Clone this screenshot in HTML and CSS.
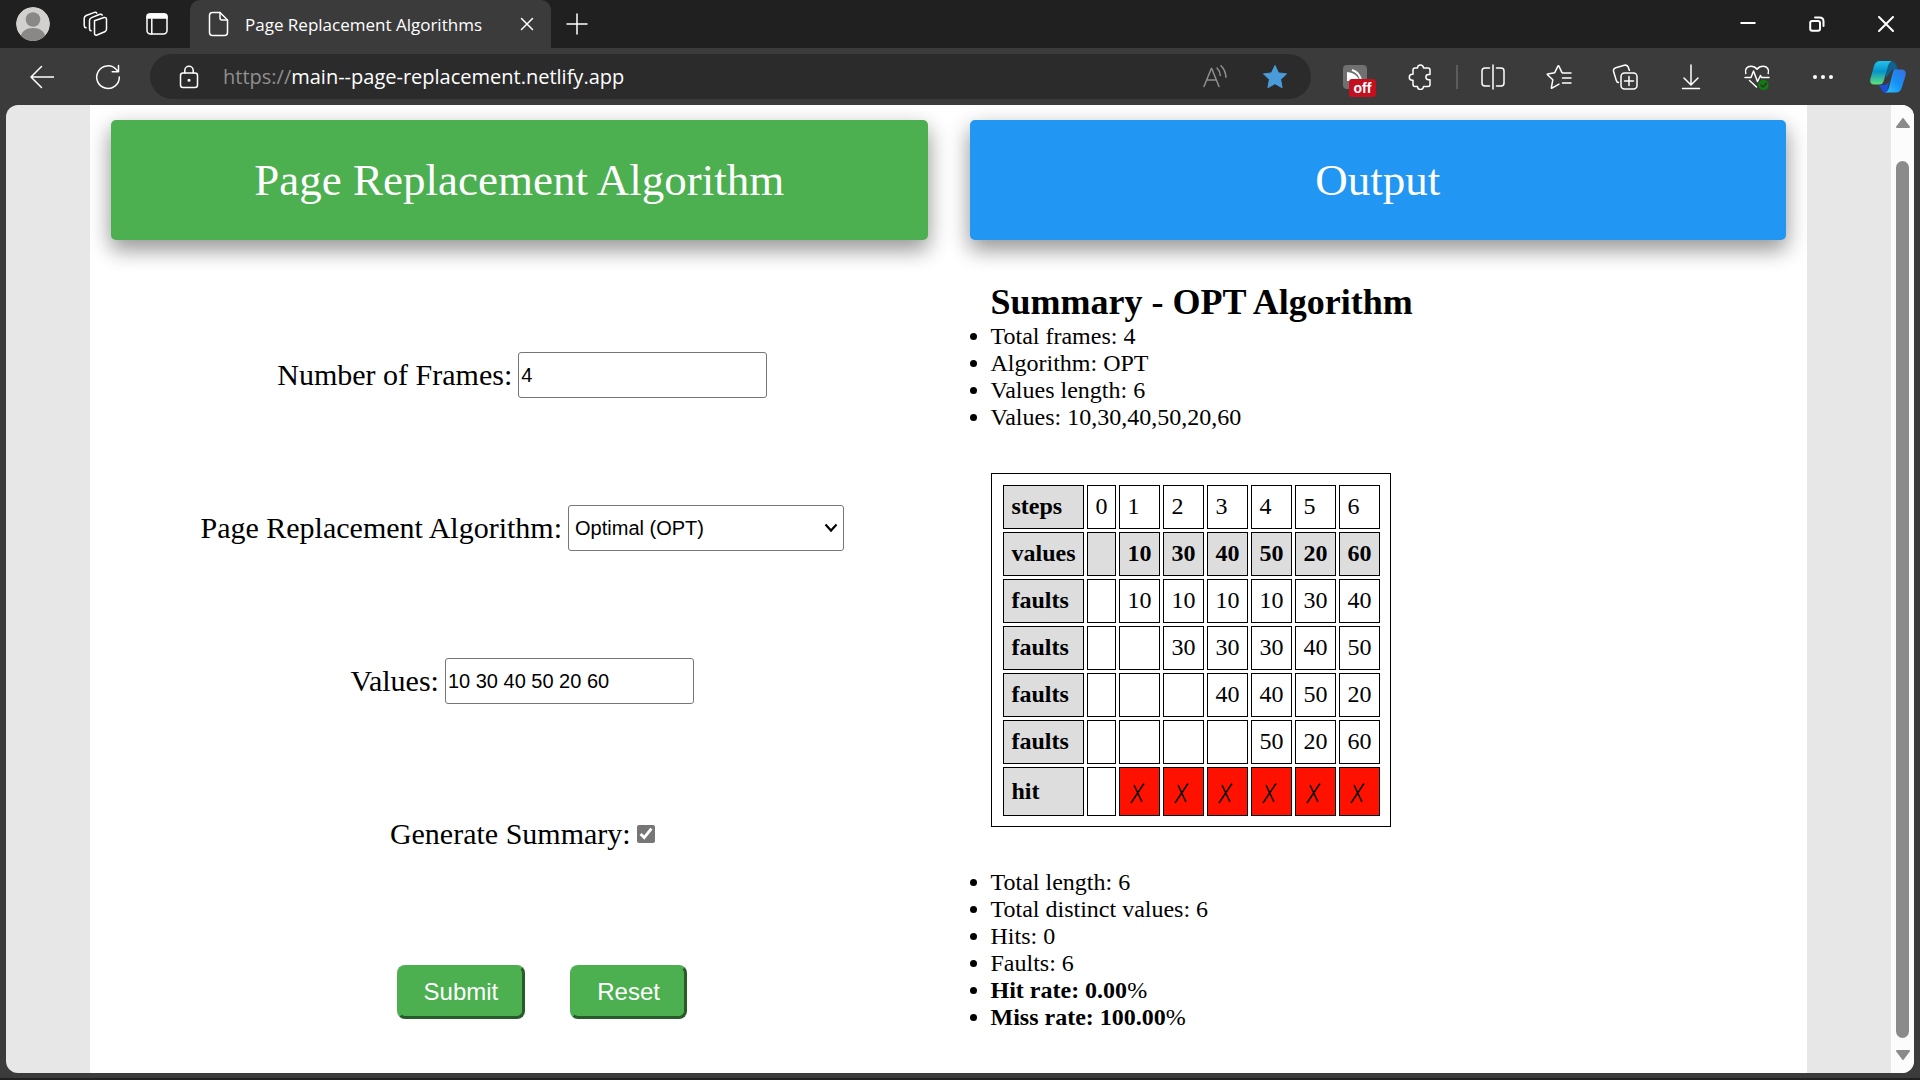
FILE: index.html
```html
<!DOCTYPE html>
<html lang="en">
<head>
<meta charset="utf-8">
<meta name="viewport" content="width=device-width, initial-scale=1">
<title>Page Replacement Algorithms</title>
<link rel="stylesheet" href="styles.css">
</head>
<body>
<header class="titlebar">
  <button class="title-btn" type="button" aria-label="Profile">
    <svg width="34" height="34" viewBox="0 0 34 34"><defs><clipPath id="face"><circle cx="17" cy="17" r="17"/></clipPath></defs><g clip-path="url(#face)"><circle cx="17" cy="17" r="17" fill="#d2d0ce"/><circle cx="17" cy="12.500" r="7.300" fill="#8a8886"/><path d="M4 34c0-9 5-13 13-13s13 4 13 13z" fill="#8a8886"/></g></svg>
  </button>
  <button class="title-btn" type="button" aria-label="Workspaces">
    <svg class="line" width="26" height="26" viewBox="0 0 26 26"><path d="M12.500 9.800l9.500-3.300q2.500-.5 2.500 2v9.500q0 2-1.700 2.700l-7.800 3.300q-2.500.8-2.500-1.800z"/><path d="M9 19.800q-1.500-.2-1.500-2.200V9.500q0-2 2-2.900l8.500-3.300q1.500-.5 2.200.8"/><path d="M4 16.800q-1.800-.3-1.800-2.300V7.500q0-2 2-3L12.500 1.400q1.500-.5 2.300.7"/></svg>
  </button>
  <button class="title-btn" type="button" aria-label="Tab actions">
    <svg class="line" width="24" height="24" viewBox="0 0 24 24"><rect x="2" y="2" width="20" height="20" rx="3.500"/><path d="M2 4.500q0-2.500 2.500-2.500h15q2.500 0 2.500 2.500V6H2z" fill="#fff"/><path d="M6.800 7v15"/></svg>
  </button>
  <div class="tab">
    <svg class="line tab-icon" width="22" height="26" viewBox="0 0 22 26"><path d="M4.500 1.500H12l7.500 7.500v12.500q0 3-3 3h-12q-3 0-3-3v-17q0-3 3-3z"/><path d="M12 1.500V7q0 2 2 2h5.500"/></svg>
    <span class="tab-title">Page Replacement Algorithms</span>
    <button class="tab-close" type="button" aria-label="Close tab"><svg class="line" width="14" height="14" viewBox="0 0 14 14"><path d="M1.500 1.500l11 11M12.500 1.500l-11 11"/></svg></button>
  </div>
  <button class="new-tab" type="button" aria-label="New tab"><svg class="line" width="22" height="22" viewBox="0 0 22 22"><path d="M11 1v20M1 11h20"/></svg></button>
  <div class="window-controls">
    <button type="button" aria-label="Minimize"><svg width="16" height="16" viewBox="0 0 16 16"><path d="M.5 7h15" stroke="#fff" stroke-width="2"/></svg></button>
    <button type="button" aria-label="Restore"><svg class="bold" width="16" height="16" viewBox="0 0 16 16"><rect x="1.200" y="5" width="9.800" height="9.800" rx="2"/><path d="M6 1.500h4.500q4 0 4 4V10"/></svg></button>
    <button type="button" aria-label="Close"><svg class="bold" width="16" height="16" viewBox="0 0 16 16"><path d="M1 1l14 14M15 1L1 15"/></svg></button>
  </div>
</header>

<nav class="toolbar" aria-label="Browser toolbar">
  <button class="tool" type="button" aria-label="Back"><svg class="line" width="24" height="24" viewBox="0 0 24 24"><path d="M23.800 12H1M11.500 1.500L1 12l10.500 10.500"/></svg></button>
  <button class="tool" type="button" aria-label="Refresh"><svg class="line" width="26" height="26" viewBox="0 0 26 26"><path d="M24.300 13a11.300 11.300 0 1 1-3-7.500l2.200 2.200M23.500 1.500v6.300h-6.300"/></svg></button>
  <div class="address">
    <svg class="line lock" width="20" height="24" viewBox="0 0 20 24"><rect x="1.500" y="8" width="17" height="14.500" rx="2.500"/><path d="M5.800 8V5.500a4.200 4.200 0 0 1 8.400 0V8"/><circle cx="10" cy="15.300" r=".8" fill="#fff"/></svg>
    <span class="url"><span class="scheme">https://</span>main--page-replacement.netlify.app</span>
    <button class="address-btn" type="button" aria-label="Read aloud"><svg class="line dim" width="24" height="24" viewBox="0 0 24 24"><path d="M1 21.500L8.300 3.500h.4L16 21.500M3.700 15h9.600M14 3q2.800 2.700 3.300 7.500M18 .8q4.500 4.500 5 11.500"/></svg></button>
    <button class="address-btn" type="button" aria-label="Edit favorite"><svg width="26" height="26" viewBox="0 0 26 26"><path d="M13 1.500l3.500 7.400 8 1-5.900 5.600 1.500 8.200-7.100-4-7.100 4 1.500-8.200-5.900-5.600 8-1z" fill="#4a9bd9" stroke="#4a9bd9" stroke-width="1" stroke-linejoin="round"/></svg></button>
  </div>
  <button class="tool extension" type="button" aria-label="Extension">
    <svg width="24" height="24" viewBox="0 0 24 24"><rect width="24" height="24" rx="4" fill="#707070"/><path d="M4 16V7q9 .5 13 9z" fill="#fff"/><path d="M9 5q8 2.500 9 11" fill="none" stroke="#fff" stroke-width="2"/></svg>
    <span class="badge">off</span>
  </button>
  <button class="tool" type="button" aria-label="Extensions"><svg class="line" width="26" height="26" viewBox="0 0 26 26"><path d="M9.500 4a3 3 0 0 1 6 0H20q2 0 2 2v4.500h-1.500a2.500 2.500 0 0 0 0 5.200H22V20.500q0 2-2 2h-4.500a3 3 0 0 1-6 0H7q-2 0-2-2v-4.300H4.300a3 3 0 0 1 0-6H5V6q0-2 2-2z"/></svg></button>
  <span class="divider"></span>
  <button class="tool" type="button" aria-label="Split screen"><svg class="line" width="24" height="26" viewBox="0 0 24 26"><path d="M8.500 4H4Q1 4 1 7v12q0 3 3 3h4.500M15.500 4H20q3 0 3 3v12q0 3-3 3h-4.500M12 1v24"/></svg></button>
  <button class="tool" type="button" aria-label="Favorites"><svg class="line" width="26" height="26" viewBox="0 0 26 26"><path d="M13 20.200l-7 4q-.8.400-.6-.6l1.400-7.800-5.300-5q-.6-.7.200-.9l7-1.200 3.200-6.600q.5-.9 1 0l3.100 6.500M16.500 9H25M16.500 14H25M16.500 19H25"/></svg></button>
  <button class="tool" type="button" aria-label="Collections"><svg class="line" width="26" height="26" viewBox="0 0 26 26"><rect x="9" y="9" width="16" height="16" rx="3.500"/><path d="M17 12.500v9M12.500 17h9M6.500 18.500q-1.700-.2-2.300-2.300L1.600 7.500Q.8 4.600 3.800 3.700l8.500-2.400q3-.8 4 2l1 3"/></svg></button>
  <button class="tool" type="button" aria-label="Downloads"><svg class="line" width="24" height="26" viewBox="0 0 24 26"><path d="M12 1v19M5 14l7 7 7-7M3.500 24.500h17"/></svg></button>
  <button class="tool" type="button" aria-label="Browser essentials"><svg class="line" width="26" height="26" viewBox="0 0 26 26"><path d="M1.800 9.500C.5 5 3 2.300 7 2.300c2.500 0 4.500 1 6 3 1.500-2 3.500-3 6-3 4 0 6.500 2.700 5.200 7.200M1 13.500h6l2.500-6.500 4 10.500 3-6 1 2H25M5.500 16.500L12.500 23"/><circle cx="19.500" cy="21" r="5.200" fill="#107c10" stroke="none"/><path d="M17 21l2 2 3.500-4" stroke="#303030"/></svg></button>
  <button class="tool" type="button" aria-label="Settings and more"><svg width="22" height="6" viewBox="0 0 22 6"><g fill="#fff"><circle cx="3" cy="3" r="2"/><circle cx="11" cy="3" r="2"/><circle cx="19" cy="3" r="2"/></g></svg></button>
  <button class="tool copilot" type="button" aria-label="Copilot"><svg width="36" height="34" viewBox="0 0 36 34"><defs><linearGradient id="cyan" x1="0" y1="0" x2="0" y2="1"><stop offset="0" stop-color="#22c2ee"/><stop offset=".45" stop-color="#0794c8"/><stop offset="1" stop-color="#5fe07a"/></linearGradient><linearGradient id="blue" x1="1" y1="0" x2="0" y2="1"><stop offset="0" stop-color="#3a6fe0"/><stop offset=".5" stop-color="#1590f5"/><stop offset="1" stop-color="#2cc4ff"/></linearGradient></defs><path d="M16 1.500h6q3 0 4 3l2 5.500h-6l-6 8z" fill="#12608e"/><path d="M9 25h6l4-3-2 11q-4 0-5-2.500z" fill="#1c4fd8"/><path d="M10 1h12q-3 1-4 5l-4 14q-1 4.500-5 4.500H4Q-1 24.500.6 18L4 6q1.500-5 6-5z" fill="url(#cyan)"/><path d="M25 9.500h6q6 0 4.500 6L32 27q-1.500 5.500-6 5.500H15.500q2.500-1 3.500-5l3.500-14q1-4 2.500-4z" fill="url(#blue)"/></svg></button>
</nav>

<div class="viewport">
  <div class="page">
    <main class="panel">
      <section class="column">
        <h1 class="banner banner-green">Page Replacement Algorithm</h1>
        <form class="form">
          <div class="field"><label for="frames">Number of Frames:</label><input class="text-input" id="frames" type="text" value="4"></div>
          <div class="field"><label for="algorithm">Page Replacement Algorithm:</label><select class="select" id="algorithm"><option>Optimal (OPT)</option></select></div>
          <div class="field"><label for="values">Values:</label><input class="text-input" id="values" type="text" value="10 30 40 50 20 60"></div>
          <div class="field"><label for="summary">Generate Summary:</label><input class="check" id="summary" type="checkbox" checked></div>
          <div class="actions"><button class="action" type="button">Submit</button><button class="action" type="reset">Reset</button></div>
        </form>
      </section>
      <section class="column">
        <h1 class="banner banner-blue">Output</h1>
        <div class="output">
          <h2 class="summary-title">Summary - OPT Algorithm</h2>
          <ul class="facts">
            <li>Total frames: 4</li>
            <li>Algorithm: OPT</li>
            <li>Values length: 6</li>
            <li>Values: 10,30,40,50,20,60</li>
          </ul>
          <table class="steps">
            <tr><th>steps</th><td>0</td><td>1</td><td>2</td><td>3</td><td>4</td><td>5</td><td>6</td></tr>
            <tr><th>values</th><th></th><th>10</th><th>30</th><th>40</th><th>50</th><th>20</th><th>60</th></tr>
            <tr><th>faults</th><td></td><td>10</td><td>10</td><td>10</td><td>10</td><td>30</td><td>40</td></tr>
            <tr><th>faults</th><td></td><td></td><td>30</td><td>30</td><td>30</td><td>40</td><td>50</td></tr>
            <tr><th>faults</th><td></td><td></td><td></td><td>40</td><td>40</td><td>50</td><td>20</td></tr>
            <tr><th>faults</th><td></td><td></td><td></td><td></td><td>50</td><td>20</td><td>60</td></tr>
            <tr class="hit-row"><th>hit</th><td></td>
              <td class="miss"><svg class="cross" viewBox="0 0 20 26"><path d="M6 7l8 17M16 5.500L3 25"/></svg></td>
              <td class="miss"><svg class="cross" viewBox="0 0 20 26"><path d="M6 7l8 17M16 5.500L3 25"/></svg></td>
              <td class="miss"><svg class="cross" viewBox="0 0 20 26"><path d="M6 7l8 17M16 5.500L3 25"/></svg></td>
              <td class="miss"><svg class="cross" viewBox="0 0 20 26"><path d="M6 7l8 17M16 5.500L3 25"/></svg></td>
              <td class="miss"><svg class="cross" viewBox="0 0 20 26"><path d="M6 7l8 17M16 5.500L3 25"/></svg></td>
              <td class="miss"><svg class="cross" viewBox="0 0 20 26"><path d="M6 7l8 17M16 5.500L3 25"/></svg></td>
            </tr>
          </table>
          <ul class="facts">
            <li>Total length: 6</li>
            <li>Total distinct values: 6</li>
            <li>Hits: 0</li>
            <li>Faults: 6</li>
            <li><b>Hit rate: 0.00</b>%</li>
            <li><b>Miss rate: 100.00</b>%</li>
          </ul>
        </div>
      </section>
    </main>
  </div>
  <div class="scrollbar" aria-hidden="true">
    <svg width="14" height="10" viewBox="0 0 14 10"><path d="M7 1l6 8H1z" fill="#8b8b8b" stroke="#8b8b8b" stroke-width="2" stroke-linejoin="round"/></svg>
    <span class="thumb"></span>
    <svg width="14" height="10" viewBox="0 0 14 10"><path d="M7 9L1 1h12z" fill="#8b8b8b" stroke="#8b8b8b" stroke-width="2" stroke-linejoin="round"/></svg>
  </div>
</div>
<div class="frame-edge"></div>
</body>
</html>
```
FILE: styles.css
```css
* {
  box-sizing: border-box;
}

body {
  margin: 0;
  min-height: 100vh;
  display: flex;
  flex-direction: column;
  background: #3b3b3b;
  color: #000;
  font-family: "Liberation Serif", "Times New Roman", serif;
}

svg {
  display: block;
}

.line,
.bold {
  fill: none;
  stroke: #fff;
  stroke-width: 1.5;
  stroke-linecap: round;
  stroke-linejoin: round;
}

.bold {
  stroke-width: 2;
}

.dim {
  stroke: #8f8f8f;
}

.titlebar button,
.toolbar button {
  display: flex;
  align-items: center;
  justify-content: center;
  height: 100%;
  padding: 0;
  border: 0;
  background: none;
}

/* Title bar */
.titlebar {
  display: flex;
  height: 48px;
  padding-left: 2px;
  background: #202020;
  font-family: "Open Sans", sans-serif;
}

.title-btn {
  width: 62px;
}

.tab {
  display: flex;
  align-items: center;
  width: 361px;
  margin-left: 2px;
  padding: 0 17px 0 18px;
  border-radius: 10px 10px 0 0;
  background: #3b3b3b;
  color: #fff;
  font-size: 17px;
}

.tab-title {
  flex: 1;
  margin-left: 15px;
  white-space: nowrap;
}

.new-tab {
  width: 52px;
}

.window-controls {
  display: flex;
  margin-left: auto;
}

.window-controls button {
  width: 69px;
}

/* Toolbar */
.toolbar {
  display: flex;
  align-items: center;
  height: 57px;
  padding-left: 9px;
  font-family: "Open Sans", sans-serif;
}

.toolbar .tool {
  flex: 0 0 66px;
}

.toolbar .copilot {
  flex-basis: 64px;
}

.address {
  flex: 1;
  display: flex;
  align-items: center;
  height: 45px;
  margin: 0 11px 0 9px;
  padding: 0 6px 0 29px;
  border-radius: 23px;
  background: #2b2b2b;
}

.lock {
  flex: none;
}

.url {
  flex: 1;
  margin-left: 24px;
  color: #fff;
  font-size: 20px;
  white-space: nowrap;
}

.scheme {
  color: #8f8f8f;
}

.address-btn {
  width: 60px;
}

.extension {
  position: relative;
}

.badge {
  position: absolute;
  left: 27px;
  top: 31px;
  width: 27px;
  height: 18px;
  border-radius: 3px;
  background: #c50f1f;
  color: #fff;
  font-size: 14px;
  font-weight: 700;
  line-height: 18px;
}

.divider {
  flex: none;
  width: 2px;
  height: 24px;
  margin: 0 2px;
  background: #5c5c5c;
}

/* Page area */
.viewport {
  flex: 1;
  display: flex;
  margin: 0 6px;
  overflow: hidden;
  border-radius: 12px;
  background: #e7e7e7;
}

.page {
  flex: 1;
  display: flex;
  padding: 0 84px;
}

.panel {
  flex: 1;
  display: grid;
  grid-template-columns: 1fr 1fr;
  overflow: hidden;
  background: #fff;
}

.column {
  padding: 15px 21px 0;
}

.banner {
  margin: 0;
  border-radius: 5px;
  color: #fff;
  font-size: 45px;
  font-weight: 400;
  line-height: 120px;
  text-align: center;
  box-shadow: 0 10px 20px rgba(0, 0, 0, 0.25), 0 8px 25px rgba(0, 0, 0, 0.22);
}

.banner-green {
  background: #4caf50;
}

.banner-blue {
  background: #2196f3;
}

/* Form */
.form {
  display: flex;
  flex-direction: column;
  gap: 107px;
  padding-top: 112px;
}

.field {
  display: flex;
  align-items: center;
  justify-content: center;
  gap: 6px;
  height: 46px;
  padding-left: 6px;
  font-size: 30px;
}

.text-input,
.select {
  height: 46px;
  border: 1px solid #767676;
  border-radius: 3px;
  background: #fff;
  color: #000;
  font-family: "Liberation Sans", Arial, sans-serif;
  font-size: 20px;
}

.text-input {
  width: 249px;
  padding: 0 2px;
}

.select {
  width: 276px;
  padding: 0 6px;
  appearance: none;
  background-image: url("data:image/svg+xml,%3Csvg xmlns='http://www.w3.org/2000/svg' width='14' height='10' viewBox='0 0 14 10'%3E%3Cpath d='M1.500 1.500L7 7.500l5.500-6' fill='none' stroke='%23000' stroke-width='2.200'/%3E%3C/svg%3E");
  background-repeat: no-repeat;
  background-position: right 5px center;
}

.check {
  width: 18px;
  height: 18px;
  margin: 0;
  accent-color: #767676;
}

.actions {
  display: flex;
  justify-content: center;
  padding-top: 1px;
}

.action {
  height: 54px;
  margin-left: 45px;
  padding: 0 24px;
  border: 3px outset #4caf50;
  border-radius: 8px;
  background: #4caf50;
  color: #fff;
  font-family: "Liberation Sans", Arial, sans-serif;
  font-size: 24px;
}

/* Output */
.output {
  padding: 42px 21px;
  font-size: 24px;
  line-height: 27px;
}

.summary-title {
  margin: 0;
  font-size: 36px;
  line-height: 41px;
}

.facts {
  margin: 0;
  padding: 0;
}

.steps {
  margin: 42px 0;
  padding: 8px 7px 7px 8px;
  border: 1px solid #000;
  border-spacing: 3px;
}

.steps th,
.steps td {
  height: 44px;
  padding: 7px 7px 8px 8px;
  border: 1px solid #000;
  text-align: left;
}

.steps th {
  background: #ddd;
}

.steps .hit-row th,
.steps .hit-row td {
  height: 49px;
}

.steps .miss {
  background: #f10;
}

.cross {
  width: 20px;
  height: 26px;
  fill: none;
  stroke: #000;
  stroke-width: 1.5;
}

/* Scrollbar */
.scrollbar {
  display: flex;
  flex-direction: column;
  align-items: center;
  width: 23px;
  padding: 13px 0;
  background: #fcfcfc;
}

.thumb {
  flex: 1;
  width: 13px;
  margin: 33px 0 12px;
  border-radius: 7px;
  background: #8b8b8b;
}

.frame-edge {
  height: 7px;
  border-bottom: 2px solid #202020;
}
```
